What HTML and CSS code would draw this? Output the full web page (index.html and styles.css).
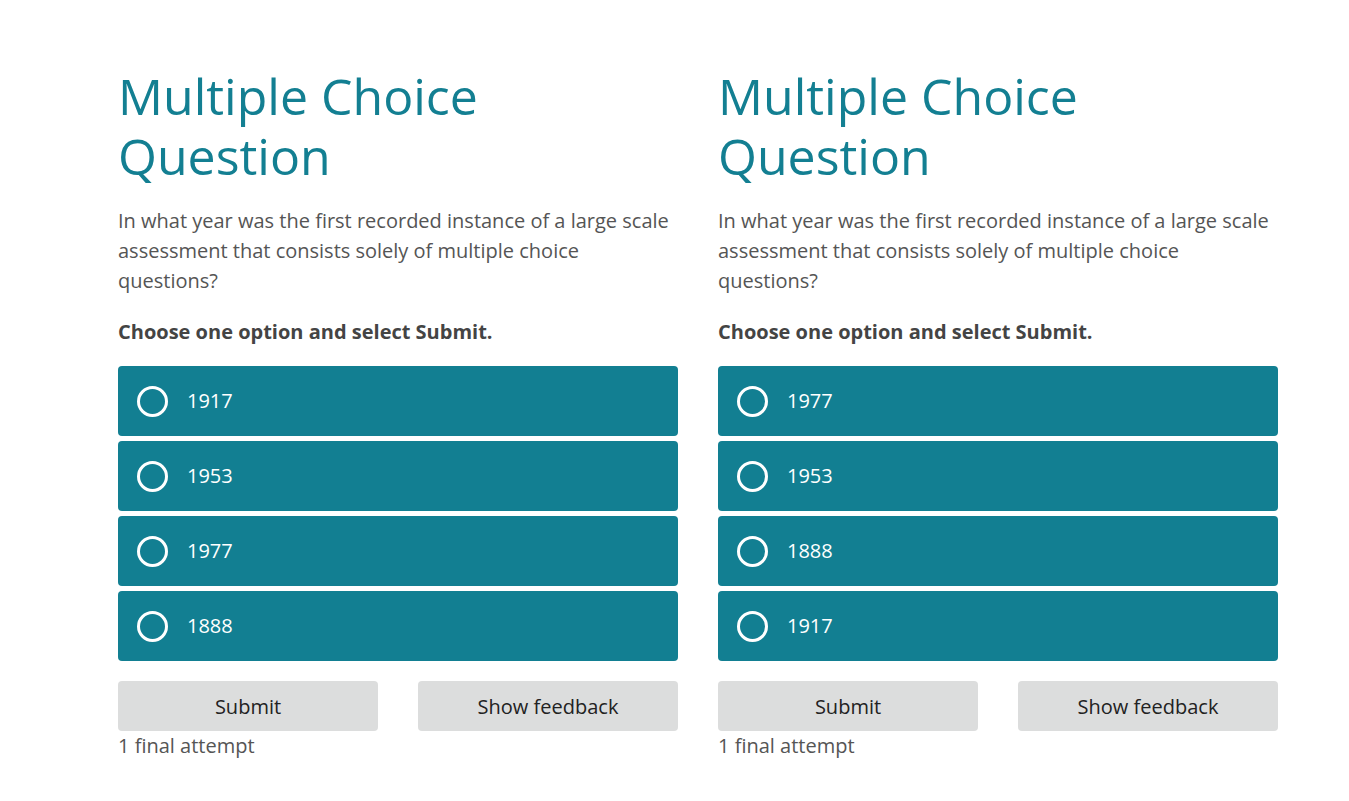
FILE: index.html
```html
<!DOCTYPE html>
<html lang="en">
<head>
<meta charset="utf-8">
<title>Multiple Choice Question</title>
<link rel="stylesheet" href="styles.css">
</head>
<body>
<main class="page">
  <section class="mcq">
    <h1 class="mcq-title">Multiple Choice Question</h1>
    <p class="mcq-question">In what year was the first recorded instance of a large scale assessment that consists solely of multiple choice questions?</p>
    <p class="mcq-instruction">Choose one option and select Submit.</p>
    <div class="mcq-options">
      <div class="option"><span class="radio"></span><span class="option-label">1917</span></div>
      <div class="option"><span class="radio"></span><span class="option-label">1953</span></div>
      <div class="option"><span class="radio"></span><span class="option-label">1977</span></div>
      <div class="option"><span class="radio"></span><span class="option-label">1888</span></div>
    </div>
    <div class="mcq-actions">
      <button class="btn">Submit</button>
      <button class="btn">Show feedback</button>
    </div>
    <p class="mcq-attempts">1 final attempt</p>
  </section>
  <section class="mcq">
    <h1 class="mcq-title">Multiple Choice Question</h1>
    <p class="mcq-question">In what year was the first recorded instance of a large scale assessment that consists solely of multiple choice questions?</p>
    <p class="mcq-instruction">Choose one option and select Submit.</p>
    <div class="mcq-options">
      <div class="option"><span class="radio"></span><span class="option-label">1977</span></div>
      <div class="option"><span class="radio"></span><span class="option-label">1953</span></div>
      <div class="option"><span class="radio"></span><span class="option-label">1888</span></div>
      <div class="option"><span class="radio"></span><span class="option-label">1917</span></div>
    </div>
    <div class="mcq-actions">
      <button class="btn">Submit</button>
      <button class="btn">Show feedback</button>
    </div>
    <p class="mcq-attempts">1 final attempt</p>
  </section>
</main>
</body>
</html>
```

FILE: styles.css
```css
* { box-sizing: border-box; }
html, body { margin: 0; padding: 0; background: #ffffff; }
body {
  font-family: "Open Sans", "Noto Sans", sans-serif;
  color: #4d4d4d;
}
.page {
  display: flex;
  gap: 40px;
  padding: 66px 0 0 118px;
}
.mcq {
  width: 560px;
  display: flex;
  flex-direction: column;
}
.mcq-title {
  margin: 0;
  font-size: 50px;
  line-height: 60px;
  font-weight: 400;
  color: #137f92;
}
.mcq-question {
  margin: 20px 0 0;
  font-size: 20px;
  line-height: 30px;
  color: #555555;
}
.mcq-instruction {
  margin: 21px 0 0;
  font-size: 20px;
  line-height: 30px;
  font-weight: 700;
  color: #444444;
}
.mcq-options {
  margin-top: 19px;
  display: flex;
  flex-direction: column;
  gap: 5px;
}
.option {
  height: 70px;
  background: #127f92;
  border-radius: 4px;
  display: flex;
  align-items: center;
  padding-left: 19px;
  gap: 19px;
  color: #ffffff;
  font-size: 20px;
}
.option-label { line-height: 30px; }
.radio {
  width: 31px;
  height: 31px;
  border: 3px solid #ffffff;
  border-radius: 50%;
  flex: none;
}
.mcq-actions {
  margin-top: 20px;
  display: flex;
  justify-content: space-between;
}
.btn {
  width: 260px;
  height: 50px;
  border: none;
  border-radius: 4px;
  background: #dcdddd;
  font-family: "Open Sans", "Noto Sans", sans-serif;
  font-size: 20px;
  color: #222222;
  padding: 0;
}
.mcq-attempts {
  margin: 0;
  font-size: 20px;
  line-height: 30px;
  color: #555555;
}
```
